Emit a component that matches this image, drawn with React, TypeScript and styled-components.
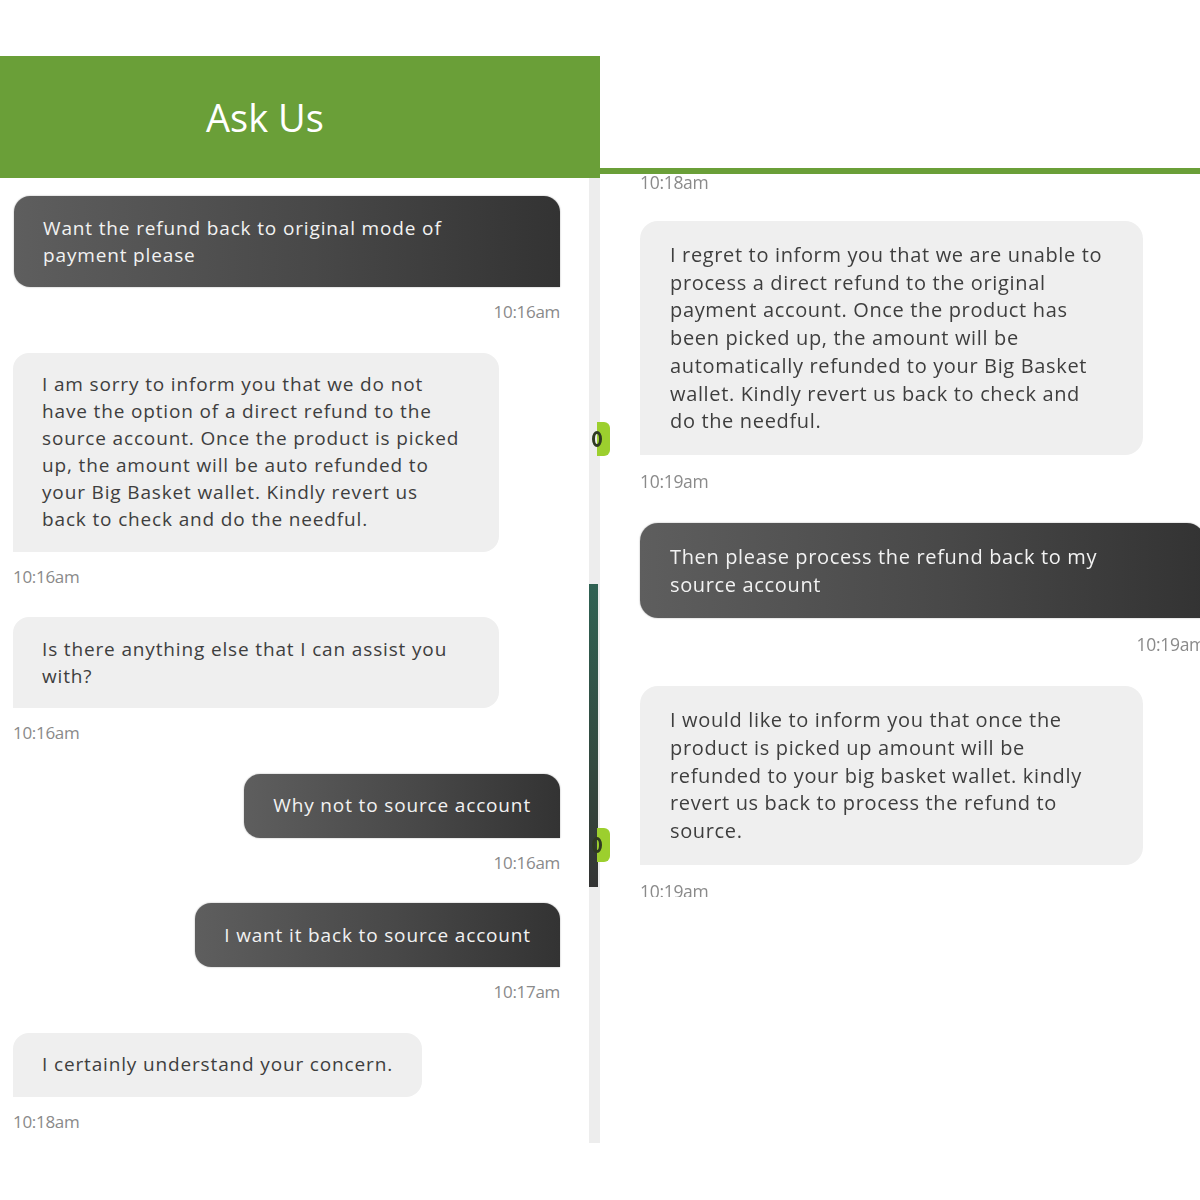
import React from "react";
import styled, { createGlobalStyle, css } from "styled-components";

const GlobalStyle = createGlobalStyle`
  html, body {
    margin: 0;
    padding: 0;
    background: #ffffff;
  }
  body {
    font-family: "Open Sans", "Noto Sans", sans-serif;
  }
`;

type Who = "agent" | "user";
type Size = "sm" | "lg";
type Msg = { who: Who; lines: string[]; time: string; width?: number };

const leftMessages: Msg[] = [
  { who: "user", lines: ["Want the refund back to original mode of", "payment please"], time: "10:16am", width: 546 },
  {
    who: "agent",
    lines: [
      "I am sorry to inform you that we do not",
      "have the option of a direct refund to the",
      "source account. Once the product is picked",
      "up, the amount will be auto refunded to",
      "your Big Basket wallet. Kindly revert us",
      "back to check and do the needful.",
    ],
    time: "10:16am",
    width: 486,
  },
  { who: "agent", lines: ["Is there anything else that I can assist you", "with?"], time: "10:16am", width: 486 },
  { who: "user", lines: ["Why not to source account"], time: "10:16am" },
  { who: "user", lines: ["I want it back to source account"], time: "10:17am" },
  { who: "agent", lines: ["I certainly understand your concern."], time: "10:18am" },
];

const rightMessages: Msg[] = [
  {
    who: "agent",
    lines: [
      "I regret to inform you that we are unable to",
      "process a direct refund to the original",
      "payment account. Once the product has",
      "been picked up, the amount will be",
      "automatically refunded to your Big Basket",
      "wallet. Kindly revert us back to check and",
      "do the needful.",
    ],
    time: "10:19am",
    width: 503,
  },
  { who: "user", lines: ["Then please process the refund back to my", "source account"], time: "10:19am", width: 565 },
  {
    who: "agent",
    lines: [
      "I would like to inform you that once the",
      "product is picked up amount will be",
      "refunded to your big basket wallet. kindly",
      "revert us back to process the refund to",
      "source.",
    ],
    time: "10:19am",
    width: 503,
  },
];

const Page = styled.div`
  width: 1200px;
  height: 1200px;
  display: flex;
  align-items: flex-start;
  overflow: hidden;
  background: #fff;
`;

const LeftPanel = styled.section`
  width: 600px;
  margin-top: 56px;
  display: flex;
  flex-direction: column;
  position: relative;
`;

const Header = styled.header`
  height: 122px;
  background: #6a9f38;
  display: flex;
  align-items: center;
  justify-content: center;
  padding-right: 70px;
  box-sizing: border-box;
`;

const Title = styled.h1`
  margin: 0;
  color: #ffffff;
  font-family: "Open Sans", sans-serif;
  font-weight: 500;
  font-size: 38px;
`;

const ChatBody = styled.div`
  display: flex;
  height: 965px;
`;

const Thread = styled.div<{ $size: Size }>`
  flex: 1;
  display: flex;
  flex-direction: column;
  box-sizing: border-box;
  ${(p) =>
    p.$size === "sm"
      ? css`
          padding: 18px 29px 0 13px;
          gap: 30.5px;
        `
      : css`
          padding: 0 0 0 40px;
          gap: 32px;
          width: 605px;
        `}
`;

const Group = styled.div<{ $who: Who }>`
  display: flex;
  flex-direction: column;
  align-items: ${(p) => (p.$who === "user" ? "flex-end" : "flex-start")};
`;

const Bubble = styled.div<{ $who: Who; $size: Size }>`
  box-sizing: border-box;
  max-width: 100%;
  white-space: nowrap;
  font-size: ${(p) => (p.$size === "sm" ? "19px" : "20px")};
  letter-spacing: ${(p) => (p.$size === "sm" ? "0.85px" : "0.65px")};
  line-height: ${(p) => (p.$size === "sm" ? "27px" : "27.7px")};
  padding: ${(p) => (p.$size === "sm" ? "18.5px 29px" : "20px 30px")};
  border-radius: ${(p) => {
    const r = p.$size === "sm" ? 16 : 18;
    return p.$who === "user" ? `${r}px ${r}px 0 ${r}px` : `${r}px ${r}px ${r}px 0`;
  }};
  ${(p) =>
    p.$who === "user"
      ? css`
          color: #f2f2f2;
          background: linear-gradient(90deg, #5e5e5e 0%, #484848 55%, #333333 100%);
          box-shadow: 0 0 1.5px rgba(0, 0, 0, 0.45);
        `
      : css`
          color: #3e3e3e;
          background: #efefef;
        `}
`;

const Time = styled.div<{ $size: Size }>`
  color: #8a8a8a;
  font-size: ${(p) => (p.$size === "sm" ? "17px" : "17.5px")};
  line-height: 20px;
  margin-top: ${(p) => (p.$size === "sm" ? "15px" : "16px")};
  letter-spacing: -0.3px;
`;

const Track = styled.div`
  width: 11px;
  background: #ededed;
  display: flex;
  flex-direction: column;
`;

const Thumb = styled.div`
  margin-top: 406px;
  width: 9px;
  height: 303px;
  background: linear-gradient(180deg, #2f6152 0%, #33493f 60%, #333333 100%);
`;

const Launcher = styled.span<{ $top: number }>`
  position: absolute;
  left: 597px;
  top: ${(p) => p.$top}px;
  width: 13px;
  height: 34px;
  border-radius: 0 6px 6px 0;
  background: #9ccf2e;
  z-index: 2;
  &::before {
    content: "";
    position: absolute;
    left: -5px;
    top: 9px;
    width: 10px;
    height: 16px;
    border-radius: 50%;
    border: 3px solid #2f3a22;
    box-sizing: border-box;
  }
`;

const RightPanel = styled.section`
  width: 600px;
  height: 897px;
  padding-top: 168px;
  box-sizing: border-box;
  display: flex;
  flex-direction: column;
`;

const GreenRule = styled.div`
  height: 6px;
  background: #6a9f38;
  flex-shrink: 0;
`;

const Scrolled = styled.div`
  flex: 1;
  overflow: hidden;
  filter: blur(0.7px);
`;

const LeadTime = styled(Time)`
  margin-top: -2px;
  margin-bottom: -3px;
`;

function Message({ msg, size }: { msg: Msg; size: Size }) {
  return (
    <Group $who={msg.who}>
      <Bubble $who={msg.who} $size={size} style={msg.width ? { width: msg.width } : undefined}>
        {msg.lines.map((l, i) => (
          <div key={i}>{l}</div>
        ))}
      </Bubble>
      <Time $size={size}>{msg.time}</Time>
    </Group>
  );
}

export default function App() {
  return (
    <>
      <GlobalStyle />
      <Page>
        <LeftPanel>
          <Header>
            <Title>Ask Us</Title>
          </Header>
          <ChatBody>
            <Thread $size="sm">
              {leftMessages.map((m, i) => (
                <Message key={i} msg={m} size="sm" />
              ))}
            </Thread>
            <Track>
              <Thumb />
            </Track>
          </ChatBody>
          <Launcher $top={366} />
          <Launcher $top={772} />
        </LeftPanel>
        <RightPanel>
          <GreenRule />
          <Scrolled>
            <Thread $size="lg">
              <LeadTime $size="lg">10:18am</LeadTime>
              {rightMessages.map((m, i) => (
                <Message key={i} msg={m} size="lg" />
              ))}
            </Thread>
          </Scrolled>
        </RightPanel>
      </Page>
    </>
  );
}
